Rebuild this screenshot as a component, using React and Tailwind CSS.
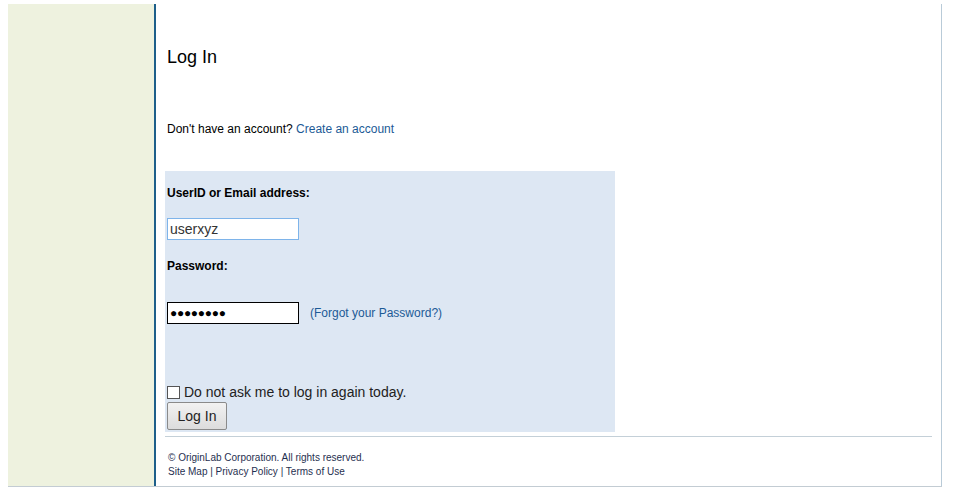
export default function App() {
  return (
    <div className="w-[954px] h-[499px] bg-white pl-[8px] pt-[4px] font-['Liberation_Sans',Arial,sans-serif] text-black">
      <div className="flex w-[934px] h-[483px] border-b border-[#c3ccd3]">
        <div className="w-[147px] bg-[#eef2df]" />
        <div className="flex-1 border-l-2 border-[#1d5f8a] border-r border-r-[#b9cbd8] pl-[9px] pr-[9px]">
          <h1 className="pl-[2px] text-[18px] leading-[22px] mt-[42px]">Log In</h1>
          <p className="pl-[2px] text-[12px] leading-[14px] mt-[54px]">
            Don't have an account? <a className="text-[#1c5a96]">Create an account</a>
          </p>
          <div className="w-[450px] h-[261px] bg-[#dde7f3] mt-[35px] pl-[2px] pt-[15px]">
            <div className="text-[12px] leading-[14px] font-bold">UserID or Email address:</div>
            <div className="mt-[18px] w-[132px] h-[22px] border border-[#7eb4ea] bg-white pl-[2px] text-[14px] leading-[20px] text-[#333]">userxyz</div>
            <div className="text-[12px] leading-[14px] font-bold mt-[19px]">Password:</div>
            <div className="flex items-center mt-[29px]">
              <div className="w-[132px] h-[22px] border border-black bg-white pl-[2px] text-[12px] leading-[20px] tracking-[-0.3px]">●●●●●●●●</div>
              <a className="ml-[11px] text-[12px] text-[#1c5a96]">(Forgot your Password?)</a>
            </div>
            <div className="flex items-center mt-[60px]">
              <div className="w-[13px] h-[13px] border border-[#555] bg-white" />
              <span className="ml-[4px] text-[14px] leading-[16px] text-[#222]">Do not ask me to log in again today.</span>
            </div>
            <button className="mt-[2px] w-[60px] h-[28px] border border-[#8a8a8a] rounded-[2px] bg-gradient-to-b from-[#f2f2f2] to-[#dcdcdc] text-[14px] text-[#222]">Log In</button>
          </div>
          <div className="mt-[4px] border-t border-[#c4d0d8] w-[767px]" />
          <div className="mt-[14px] pl-[3px] text-[10px] leading-[14px] text-[#1f3050]">
            <div>© OriginLab Corporation. All rights reserved.</div>
            <div>Site Map | Privacy Policy | Terms of Use</div>
          </div>
        </div>
      </div>
    </div>
  );
}
